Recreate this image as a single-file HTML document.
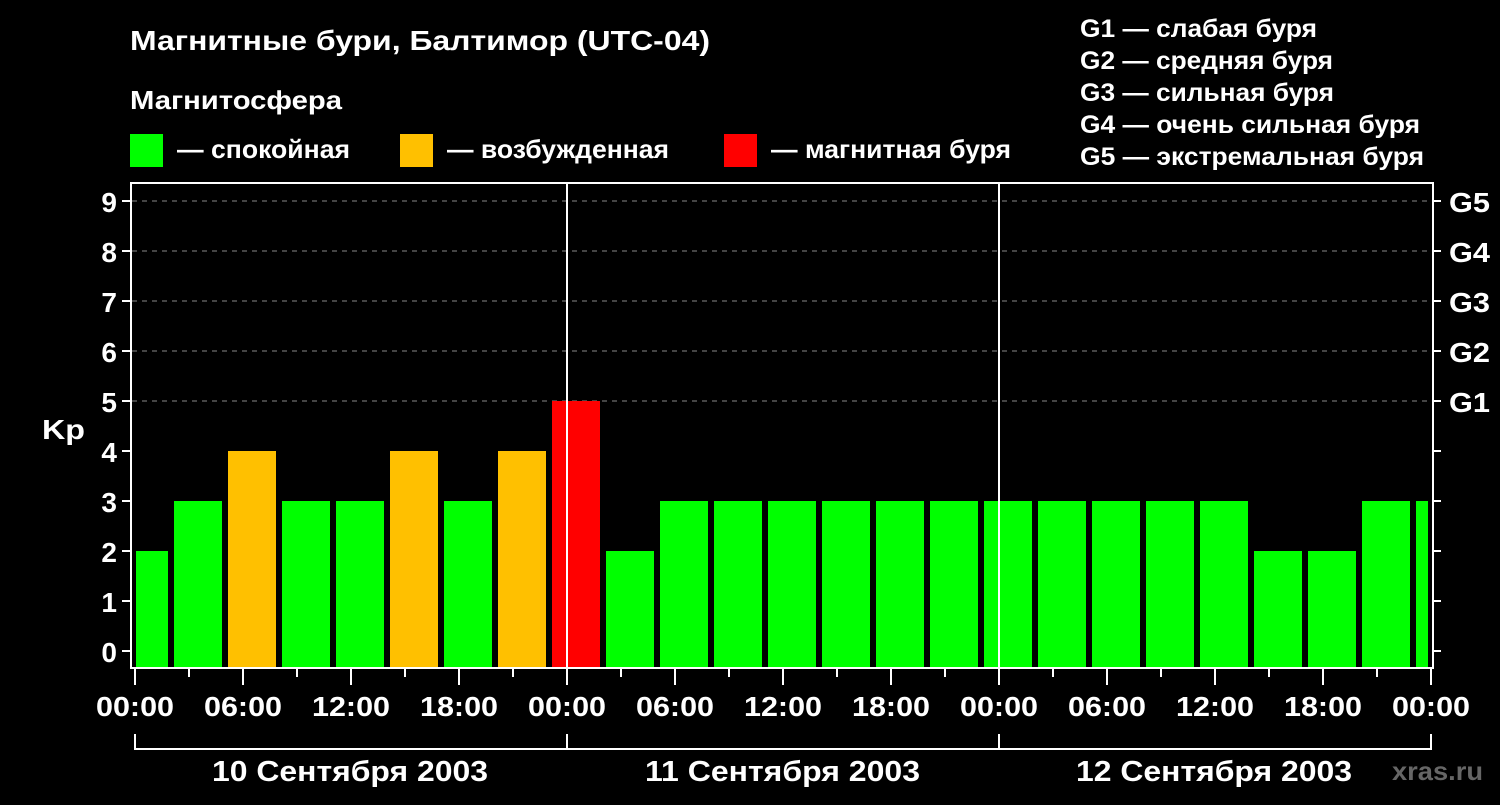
<!DOCTYPE html>
<html><head><meta charset="utf-8"><style>
body{margin:0;background:#000;width:1500px;height:800px;overflow:hidden}
svg text{font-family:"Liberation Sans",sans-serif;font-weight:bold;fill:#fff}
</style></head><body>
<svg width="1500" height="800" xmlns="http://www.w3.org/2000/svg">
<text x="130" y="50" font-size="28" textLength="580" lengthAdjust="spacingAndGlyphs">Магнитные бури, Балтимор (UTC-04)</text>
<text x="130" y="109" font-size="26" textLength="212" lengthAdjust="spacingAndGlyphs">Магнитосфера</text>
<rect x="130" y="134" width="33" height="33" fill="#00ff00"/>
<text x="177" y="158" font-size="26" textLength="173" lengthAdjust="spacingAndGlyphs">— спокойная</text>
<rect x="400" y="134" width="33" height="33" fill="#ffc000"/>
<text x="447" y="158" font-size="26" textLength="222" lengthAdjust="spacingAndGlyphs">— возбужденная</text>
<rect x="724" y="134" width="33" height="33" fill="#ff0000"/>
<text x="771" y="158" font-size="26" textLength="240" lengthAdjust="spacingAndGlyphs">— магнитная буря</text>
<g font-size="25">
<text x="1080" y="37" textLength="237" lengthAdjust="spacingAndGlyphs">G1 — слабая буря</text>
<text x="1080" y="69" textLength="253" lengthAdjust="spacingAndGlyphs">G2 — средняя буря</text>
<text x="1080" y="101" textLength="254" lengthAdjust="spacingAndGlyphs">G3 — сильная буря</text>
<text x="1080" y="133" textLength="340" lengthAdjust="spacingAndGlyphs">G4 — очень сильная буря</text>
<text x="1080" y="165" textLength="344" lengthAdjust="spacingAndGlyphs">G5 — экстремальная буря</text>
</g>
<g stroke="#888" stroke-width="1" stroke-dasharray="5,5">
<line x1="132" y1="201" x2="1432" y2="201"/><line x1="132" y1="251" x2="1432" y2="251"/>
<line x1="132" y1="301" x2="1432" y2="301"/><line x1="132" y1="351" x2="1432" y2="351"/>
<line x1="132" y1="401" x2="1432" y2="401"/>
</g>
<g id="bars">
<rect x="136" y="551" width="32" height="116" fill="#00ff00"/>
<rect x="174" y="501" width="48" height="166" fill="#00ff00"/>
<rect x="228" y="451" width="48" height="216" fill="#ffc000"/>
<rect x="282" y="501" width="48" height="166" fill="#00ff00"/>
<rect x="336" y="501" width="48" height="166" fill="#00ff00"/>
<rect x="390" y="451" width="48" height="216" fill="#ffc000"/>
<rect x="444" y="501" width="48" height="166" fill="#00ff00"/>
<rect x="498" y="451" width="48" height="216" fill="#ffc000"/>
<rect x="552" y="401" width="48" height="266" fill="#ff0000"/>
<rect x="606" y="551" width="48" height="116" fill="#00ff00"/>
<rect x="660" y="501" width="48" height="166" fill="#00ff00"/>
<rect x="714" y="501" width="48" height="166" fill="#00ff00"/>
<rect x="768" y="501" width="48" height="166" fill="#00ff00"/>
<rect x="822" y="501" width="48" height="166" fill="#00ff00"/>
<rect x="876" y="501" width="48" height="166" fill="#00ff00"/>
<rect x="930" y="501" width="48" height="166" fill="#00ff00"/>
<rect x="984" y="501" width="48" height="166" fill="#00ff00"/>
<rect x="1038" y="501" width="48" height="166" fill="#00ff00"/>
<rect x="1092" y="501" width="48" height="166" fill="#00ff00"/>
<rect x="1146" y="501" width="48" height="166" fill="#00ff00"/>
<rect x="1200" y="501" width="48" height="166" fill="#00ff00"/>
<rect x="1254" y="551" width="48" height="116" fill="#00ff00"/>
<rect x="1308" y="551" width="48" height="116" fill="#00ff00"/>
<rect x="1362" y="501" width="48" height="166" fill="#00ff00"/>
<rect x="1416" y="501" width="12" height="166" fill="#00ff00"/>
</g>
<g stroke="#fff" stroke-width="2" fill="none">
<rect x="131" y="183" width="1302" height="485"/>
<line x1="567" y1="183" x2="567" y2="668"/><line x1="999" y1="183" x2="999" y2="668"/>
<path d="M122 201h9M122 251h9M122 301h9M122 351h9M122 401h9M122 451h9M122 501h9M122 551h9M122 601h9M122 651h9"/>
<path d="M1433 201h8M1433 251h8M1433 301h8M1433 351h8M1433 401h8M1433 451h8M1433 501h8M1433 551h8M1433 601h8M1433 651h8"/>
<path d="M135 668v17M189 668v9M243 668v17M297 668v9M351 668v17M405 668v9M459 668v17M513 668v9M567 668v17M621 668v9M675 668v17M729 668v9M783 668v17M837 668v9M891 668v17M945 668v9M999 668v17M1053 668v9M1107 668v17M1161 668v9M1215 668v17M1269 668v9M1323 668v17M1377 668v9M1431 668v17"/>
<path d="M135 734v15h1296v-15M567 734v15M999 734v15"/>
</g>
<g font-size="28" text-anchor="end">
<text x="117" y="212">9</text><text x="117" y="262">8</text><text x="117" y="312">7</text>
<text x="117" y="362">6</text><text x="117" y="412">5</text><text x="117" y="462">4</text>
<text x="117" y="512">3</text><text x="117" y="562">2</text><text x="117" y="612">1</text>
<text x="117" y="662">0</text>
</g>
<text x="42" y="439" font-size="28" textLength="43" lengthAdjust="spacingAndGlyphs">Kp</text>
<g font-size="28">
<text x="1449" y="212" textLength="41" lengthAdjust="spacingAndGlyphs">G5</text><text x="1449" y="262" textLength="41" lengthAdjust="spacingAndGlyphs">G4</text><text x="1449" y="312" textLength="41" lengthAdjust="spacingAndGlyphs">G3</text>
<text x="1449" y="362" textLength="41" lengthAdjust="spacingAndGlyphs">G2</text><text x="1449" y="412" textLength="41" lengthAdjust="spacingAndGlyphs">G1</text>
</g>
<g font-size="28">
<text x="96" y="716" textLength="78" lengthAdjust="spacingAndGlyphs">00:00</text><text x="204" y="716" textLength="78" lengthAdjust="spacingAndGlyphs">06:00</text><text x="312" y="716" textLength="78" lengthAdjust="spacingAndGlyphs">12:00</text>
<text x="420" y="716" textLength="78" lengthAdjust="spacingAndGlyphs">18:00</text><text x="528" y="716" textLength="78" lengthAdjust="spacingAndGlyphs">00:00</text><text x="636" y="716" textLength="78" lengthAdjust="spacingAndGlyphs">06:00</text>
<text x="744" y="716" textLength="78" lengthAdjust="spacingAndGlyphs">12:00</text><text x="852" y="716" textLength="78" lengthAdjust="spacingAndGlyphs">18:00</text><text x="960" y="716" textLength="78" lengthAdjust="spacingAndGlyphs">00:00</text>
<text x="1068" y="716" textLength="78" lengthAdjust="spacingAndGlyphs">06:00</text><text x="1176" y="716" textLength="78" lengthAdjust="spacingAndGlyphs">12:00</text><text x="1284" y="716" textLength="78" lengthAdjust="spacingAndGlyphs">18:00</text>
<text x="1392" y="716" textLength="78" lengthAdjust="spacingAndGlyphs">00:00</text>
</g>
<g font-size="29">
<text x="212" y="781" textLength="276" lengthAdjust="spacingAndGlyphs">10 Сентября 2003</text>
<text x="645" y="781" textLength="275" lengthAdjust="spacingAndGlyphs">11 Сентября 2003</text>
<text x="1076" y="781" textLength="276" lengthAdjust="spacingAndGlyphs">12 Сентября 2003</text>
</g>
<text x="1392" y="780" font-size="26" textLength="91" lengthAdjust="spacingAndGlyphs" style="fill:#666">xras.ru</text>
</svg>
</body></html>
